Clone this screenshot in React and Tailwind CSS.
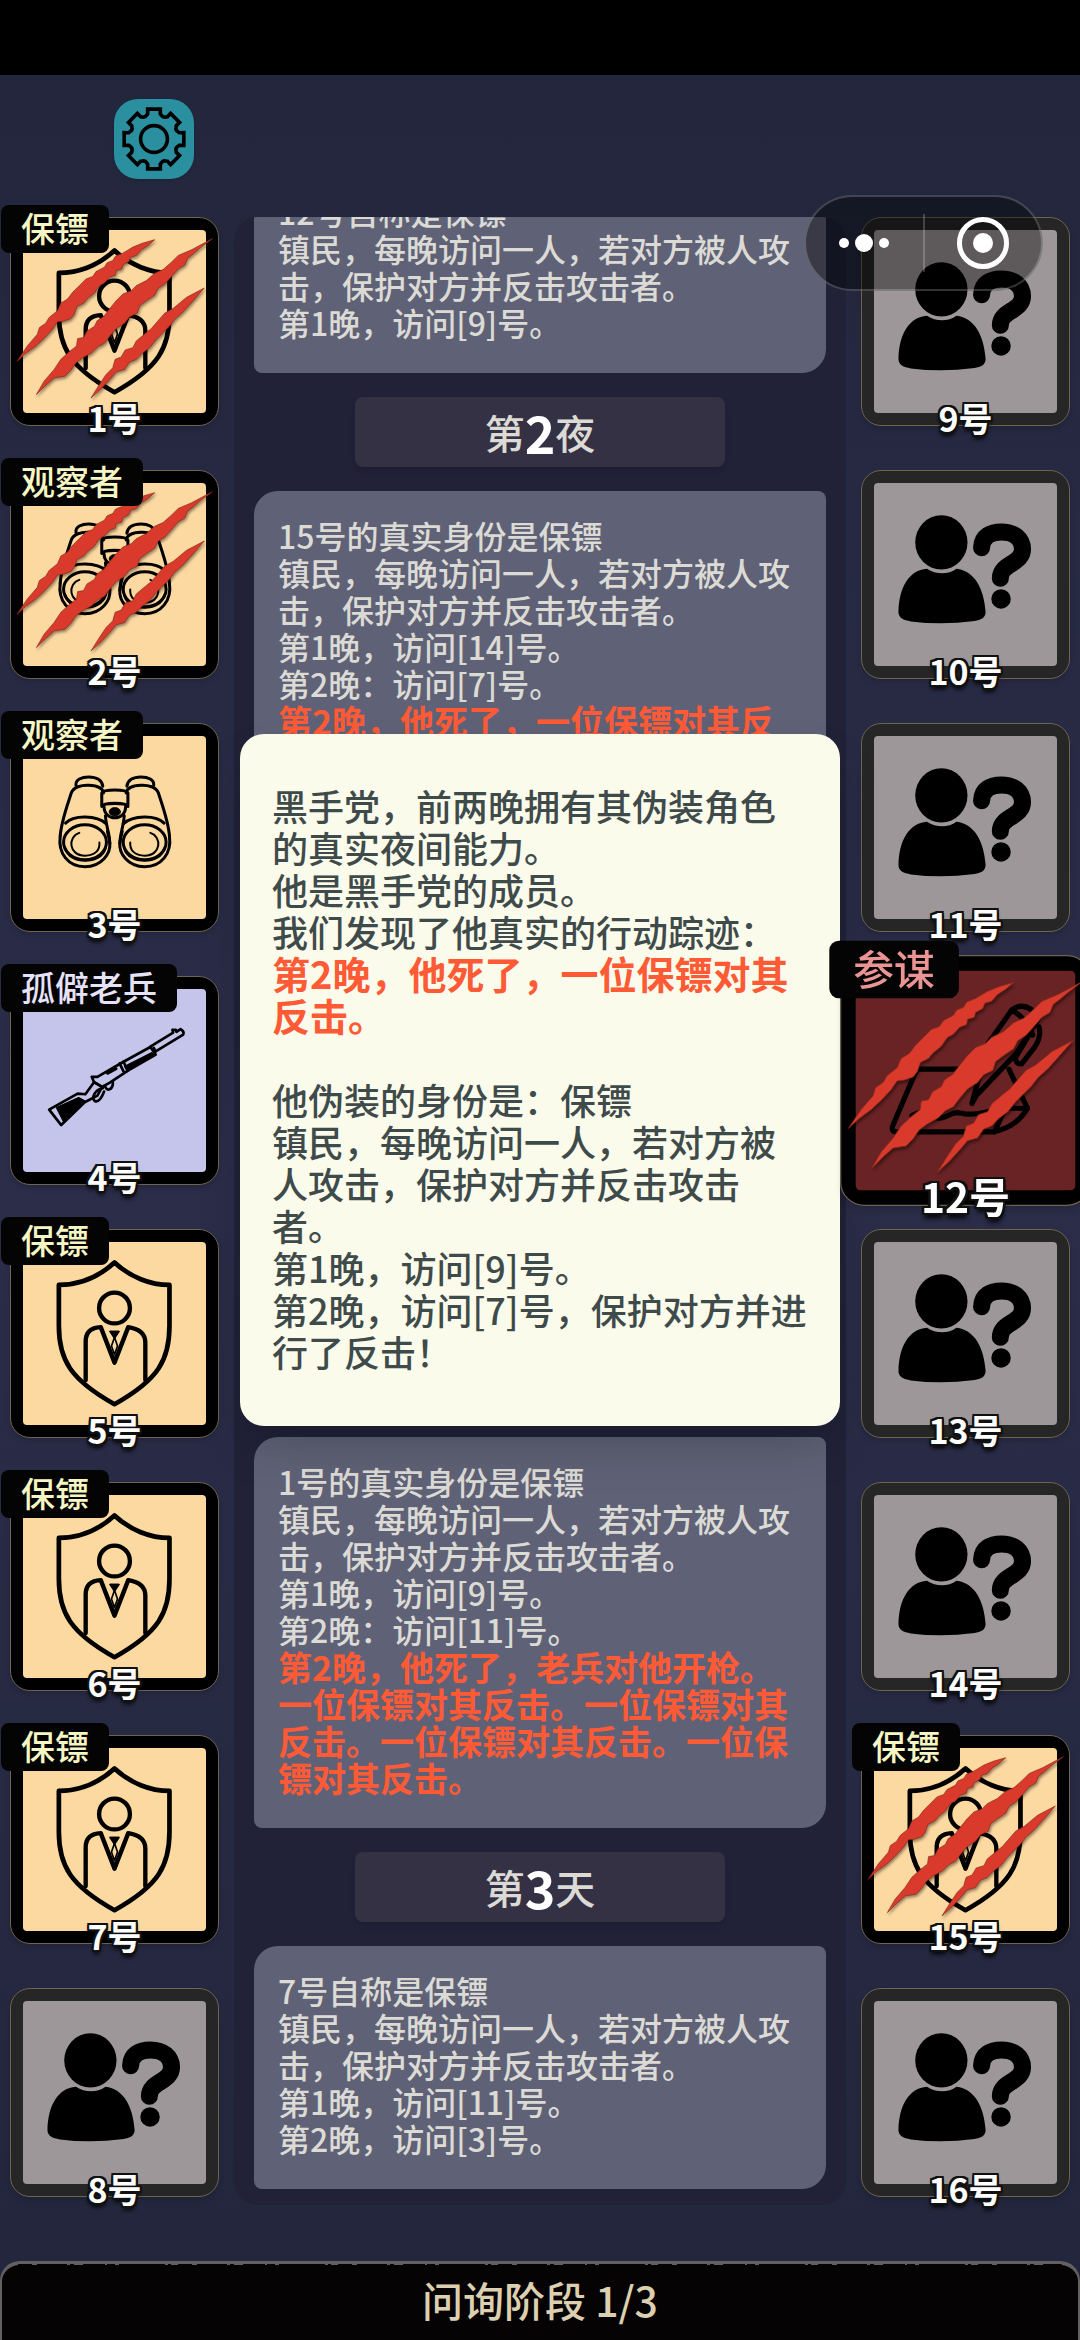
import React from "react";
import clsx from "clsx";

const seats = [
  { no: 1, role: "保镖", icon: "guard", dead: true },
  { no: 2, role: "观察者", icon: "binoculars", dead: true },
  { no: 3, role: "观察者", icon: "binoculars" },
  { no: 4, role: "孤僻老兵", icon: "rifle" },
  { no: 5, role: "保镖", icon: "guard" },
  { no: 6, role: "保镖", icon: "guard" },
  { no: 7, role: "保镖", icon: "guard" },
  { no: 8 },
  { no: 9 },
  { no: 10 },
  { no: 11 },
  { no: 12, role: "参谋", icon: "advisor", dead: true, selected: true },
  { no: 13 },
  { no: 14 },
  { no: 15, role: "保镖", icon: "guard", dead: true },
  { no: 16 },
];

const tileColor = {
  guard: "bg-[#fcd9a0]",
  binoculars: "bg-[#fcd9a0]",
  rifle: "bg-[#c5c5eb]",
  advisor: "bg-[#6a2325]",
};

const roleColor = {
  guard: "text-[#f6f6c4]",
  binoculars: "text-[#f6f6c4]",
  rifle: "text-[#e6e2fa]",
  advisor: "text-[#ea9494]",
};

const GuardIcon = () => (
  <g fill="none" stroke="#000" strokeWidth="14" strokeLinejoin="round" strokeLinecap="round">
    <path d="M273 61C225 105 165 128 107 128V250C107 350 140 410 273 484C406 410 437 350 437 250V128C380 128 320 105 273 61Z" />
    <circle cx="273" cy="197" r="46" strokeWidth="13" />
    <path d="M187 412V297Q187 256 232 254L273 360L314 254Q365 262 365 300V412" strokeWidth="13" />
    <path d="M260 267H286L273 284ZM273 284L264 310L273 336L282 310Z" strokeWidth="5" />
    <path d="M260 267H286L273 288Z" fill="#000" strokeWidth="4" />
  </g>
);

const Barrel = () => (
  <g>
    <path d="M111 299C114 255 133 205 144 170C150 152 175 146 196 147C218 148 238 154 240 170" />
    <path d="M158 147C156 130 175 122 196 122C220 122 236 132 238 150" />
    <path d="M246 238C248 270 258 290 259 320" />
    <path d="M127 260C150 235 220 235 249 262" />
    <path d="M111 299C104 350 135 390 185 390C235 390 262 350 259 320C258 305 255 295 252 285" />
    <ellipse cx="185" cy="317" rx="64" ry="52" />
    <path d="M127 335C135 385 235 385 246 335" strokeWidth="6" />
    <path d="M168 289C133 300 135 357 185 357C215 357 230 340 228 318" strokeWidth="6" />
  </g>
);

const BinocularsIcon = () => (
  <g fill="none" stroke="#000" strokeWidth="9" strokeLinecap="round" strokeLinejoin="round">
    <Barrel />
    <g transform="translate(548 0) scale(-1 1)">
      <Barrel />
    </g>
    <path d="M235 170C240 158 308 158 313 170V210C308 198 240 198 235 210Z" />
    <path d="M242 212C242 255 306 255 306 212" />
    <ellipse cx="274" cy="226" rx="17" ry="13" fill="#000" strokeWidth="2" />
  </g>
);

const RifleIcon = () => (
  <g fill="none" stroke="#000" strokeWidth="8" strokeLinecap="round" strokeLinejoin="round">
    <path d="M78 360L163 312L186 314L212 278L236 292L222 318L184 338L114 406Z" />
    <path d="M100 354L166 324L184 334L120 394Z" fill="#000" strokeWidth="4" />
    <path d="M205 262L222 262L300 217L312 244L258 280L236 292L212 278Z" />
    <path d="M252 252L278 238" />
    <path d="M238 296C214 300 204 324 214 334C226 340 236 322 242 306" />
    <path d="M244 288C248 308 270 302 268 276" />
    <path d="M300 217L380 173L396 196L312 244" />
    <path d="M306 232L384 192L390 198L314 240Z" fill="#000" />
    <path d="M380 172L448 130L446 122L456 122L458 128L470 120Q482 126 478 136L396 186" />
    <path d="M288 222L300 246M390 176L396 186" />
  </g>
);

const AdvisorIcon = () => (
  <g fill="none" stroke="#000" strokeWidth="13" strokeLinecap="round" strokeLinejoin="round">
    <path d="M270 245H152L91 388Q90 400 100 401H340Q400 390 427 342L381 245" />
    <path d="M427 342H372L345 401" />
    <path d="M289 330L330 180L388 98Q410 80 436 96L454 120L400 205L300 310Z" />
    <path d="M388 98Q425 118 440 160M456 140Q462 165 445 190L412 232Q396 232 398 215L432 158" />
    <path d="M140 360C200 330 180 385 230 360C270 340 250 370 330 350" />
  </g>
);

const UnknownIcon = () => (
  <g>
    <ellipse cx="201" cy="177" rx="78" ry="81" />
    <path d="M73 385C75 310 105 260 158 256C185 274 222 274 246 256C300 262 328 315 333 385C333 403 318 409 300 412Q200 425 110 413C88 409 73 403 73 385Z" />
    <path
      d="M321 193C322 158 350 146 380 146C418 146 443 166 443 198C443 242 377 240 377 284"
      fill="none"
      stroke="#000"
      strokeWidth="51"
      strokeLinecap="round"
    />
    <circle cx="379" cy="346" r="29" />
  </g>
);

const Claws = () => (
  <g
    transform="translate(-57 -74)"
    fill="#d93a2b"
    stroke="#8a2a1c"
    strokeWidth="2"
    strokeLinejoin="round"
    className="drop-shadow-[3px_6px_4px_rgba(0,0,0,0.45)]"
  >
    <path d="M39 466L70 420L100 385L106 365L125 352L135 335L160 315L170 292L190 280L205 260L225 240L245 220L265 213L275 198L300 185L308 172L325 165L333 152L355 143L385 125L415 113L450 103L430 120L410 133L395 150L378 155L373 168L355 178L352 190L335 195L333 208L315 215L300 232L285 240L270 262L250 278L238 292L218 302L210 325L200 338L178 346L160 348L145 370L120 397L95 420L65 442Z" />
    <path d="M97 565L120 525L150 490L170 460L195 437L217 420L220 398L238 395L248 375L270 362L278 345L298 332L315 310L335 285L355 265L380 255L395 240L425 225L450 203L475 192L500 170L520 150L560 133L622 100L585 128L565 145L548 158L540 178L520 190L500 213L480 235L460 248L450 268L425 285L405 300L398 322L375 333L360 352L335 368L315 392L300 412L280 422L262 440L235 455L215 470L200 492L182 510L150 515L125 537Z" />
    <path d="M260 575L285 535L305 505L325 485L332 460L350 453L362 432L385 425L395 405L425 380L440 368L460 345L480 322L505 308L545 275L598 247L560 290L535 318L510 340L495 360L470 385L455 400L435 425L412 442L395 460L375 468L360 490L335 497L320 515L290 548Z" />
  </g>
);

const icons = {
  guard: GuardIcon,
  binoculars: BinocularsIcon,
  rifle: RifleIcon,
  advisor: AdvisorIcon,
};

const Seat = ({ no, role, icon, dead, selected }) => {
  const Icon = icons[icon] || UnknownIcon;
  return (
    <button type="button" className={clsx("relative block w-[209px] h-[209px]", selected && "scale-120 z-30")}>
      <span
        className={clsx(
          "flex w-full h-full p-3 rounded-[20px] border border-[#6f6450] shadow-md",
          icon ? "bg-black" : "bg-[#262626]"
        )}
      >
        <span className={clsx("block w-full h-full rounded", icon ? tileColor[icon] : "bg-[#9d979a]")}>
          <svg viewBox="0 0 546 546" className="w-full h-full overflow-visible" aria-hidden="true">
            <Icon />
            {dead && <Claws />}
          </svg>
        </span>
      </span>
      {role && (
        <span
          className={clsx(
            "absolute -top-3 -left-[9px] h-12 px-5 rounded-lg bg-[#040404] text-[34px] leading-[46px] font-medium whitespace-nowrap",
            roleColor[icon]
          )}
        >
          {role}
        </span>
      )}
      <span className="absolute inset-x-0 -bottom-2 text-center text-[34px] leading-8 font-bold text-white [text-shadow:2px_0_#111,-2px_0_#111,0_2px_#111,0_-2px_#111,2px_2px_#111,-2px_2px_#111,2px_-2px_#111,-2px_-2px_#111,0_4px_4px_#000]">
        {no}号
      </span>
    </button>
  );
};

const LogCard = ({ lines, death, className }) => (
  <article
    className={clsx(
      "px-6 pt-[26px] pb-8 bg-[#5f6276] text-[#dcdad5] text-[32px] leading-[37px] font-medium rounded-tl-3xl rounded-br-3xl rounded-tr-lg rounded-bl-lg",
      className
    )}
  >
    {lines.map((line) => (
      <p key={line}>{line}</p>
    ))}
    {death && <p className="text-[34px] leading-[37px] font-bold text-[#ff5a36]">{death}</p>}
  </article>
);

const PhaseTitle = ({ day, unit }) => (
  <h2 className="flex items-center justify-center self-center w-[370px] h-[70px] shrink-0 rounded-lg bg-[#343144] text-[#dcdad5] text-[40px] font-medium shadow-md">
    第<span className="text-[52px] leading-[70px] font-bold text-white">{day}</span>
    {unit}
  </h2>
);

const guardRule = "镇民，每晚访问一人，若对方被人攻击，保护对方并反击攻击者。";

// eight teeth around the hub, in an 80x80 box
const gearPath = () => {
  const at = (r, deg) => {
    const a = (deg * Math.PI) / 180;
    return `${(40 + r * Math.sin(a)).toFixed(2)} ${(40 - r * Math.cos(a)).toFixed(2)}`;
  };
  let d = `M${at(25, -17)}`;
  for (let i = 0; i < 8; i++) {
    const a = i * 45;
    d += `L${at(26, a - 14)}L${at(30.5, a - 12)}L${at(30.5, a + 12)}L${at(26, a + 14)}L${at(25, a + 17)}Q${at(23, a + 22.5)} ${at(25, a + 28)}`;
  }
  return d + "Z";
};

const App = () => {
  return (
    <div className="relative flex flex-col min-h-screen overflow-hidden bg-linear-to-b from-[#22263c] via-[#2b2d49] to-[#22263c] font-['Noto_Sans_CJK_SC',sans-serif]">
      {/* status bar */}
      <div className="h-[75px] bg-black" />

      <header className="h-[142px] pt-6 pl-[114px]">
        <button type="button" aria-label="设置" className="block w-20 h-20 rounded-3xl bg-[#2a8f9f] shadow">
          <svg viewBox="0 0 80 80" fill="none" stroke="#000" strokeWidth="3.6" className="w-full h-full">
            <path d={gearPath()} />
            <circle cx="40" cy="40" r="13.4" />
          </svg>
        </button>
      </header>

      {/* mini program capsule */}
      <div className="absolute z-40 top-[195px] right-[37px] flex items-center w-[239px] h-24 rounded-full border-2 border-white/20 bg-black/40">
        <button type="button" aria-label="更多" className="flex flex-1 items-center justify-center gap-[6px]">
          <span className="w-[10px] h-[10px] rounded-full bg-white" />
          <span className="w-[18px] h-[18px] rounded-full bg-white" />
          <span className="w-[10px] h-[10px] rounded-full bg-white" />
        </button>
        <span className="w-[2px] h-[58px] bg-white/20" />
        <button type="button" aria-label="关闭" className="flex flex-1 items-center justify-center">
          <span className="flex items-center justify-center w-[52px] h-[52px] rounded-full border-[5px] border-white">
            <span className="w-5 h-5 rounded-full bg-white" />
          </span>
        </button>
      </div>

      <main className="flex flex-1 gap-[15px] px-[10px] mb-14">
        <div className="flex flex-col gap-11">
          {seats.slice(0, 8).map((seat) => (
            <Seat key={seat.no} {...seat} />
          ))}
        </div>

        {/* event log */}
        <section className="flex flex-col flex-1 gap-6 px-5 pb-4 rounded-3xl overflow-hidden bg-[#212238]">
          <div className="flex flex-col justify-end h-[156px] shrink-0 overflow-hidden">
            <LogCard lines={["12号自称是保镖", guardRule, "第1晚，访问[9]号。"]} />
          </div>
          <PhaseTitle day={2} unit="夜" />
          <LogCard
            className="flex-1"
            lines={["15号的真实身份是保镖", guardRule, "第1晚，访问[14]号。", "第2晚：访问[7]号。"]}
            death="第2晚，他死了，一位保镖对其反击。"
          />
          <LogCard
            lines={["1号的真实身份是保镖", guardRule, "第1晚，访问[9]号。", "第2晚：访问[11]号。"]}
            death="第2晚，他死了，老兵对他开枪。一位保镖对其反击。一位保镖对其反击。一位保镖对其反击。一位保镖对其反击。"
          />
          <PhaseTitle day={3} unit="天" />
          <LogCard lines={["7号自称是保镖", guardRule, "第1晚，访问[11]号。", "第2晚，访问[3]号。"]} />
        </section>

        <div className="flex flex-col gap-11">
          {seats.slice(8).map((seat) => (
            <Seat key={seat.no} {...seat} />
          ))}
        </div>
      </main>

      {/* seat detail */}
      <div
        role="dialog"
        className="absolute z-20 top-[734px] left-1/2 -translate-x-1/2 w-[600px] px-8 pt-[50px] pb-[54px] rounded-3xl bg-[#fafbea] text-[#3f4a4b] text-[36px] leading-[42px] font-medium shadow-2xl"
      >
        <p>黑手党，前两晚拥有其伪装角色的真实夜间能力。</p>
        <p>他是黑手党的成员。</p>
        <p>我们发现了他真实的行动踪迹：</p>
        <p className="text-[38px] leading-[42px] font-bold text-[#ff5a36]">第2晚，他死了，一位保镖对其反击。</p>
        <br />
        <p>他伪装的身份是：保镖</p>
        <p>{guardRule}</p>
        <p>第1晚，访问[9]号。</p>
        <p>第2晚，访问[7]号，保护对方并进行了反击！</p>
      </div>

      <footer className="relative flex items-center justify-center h-[79px] pb-2 rounded-t-[20px] border-x-2 border-t-4 border-[#636062] bg-[#050304] text-[#ddd0b0] text-[41px] leading-[60px] font-medium">
        <svg className="absolute inset-x-4 -top-[3px] h-1" width="97%" height="4" aria-hidden="true">
          <line x1="0" x2="100%" y1="3" y2="3" stroke="#050304" strokeWidth="2" strokeDasharray="14 5 30 3 4 9 22 2 8 4 46 3 3 7" />
        </svg>
        问询阶段 1/3
      </footer>
    </div>
  );
};

export default App;
